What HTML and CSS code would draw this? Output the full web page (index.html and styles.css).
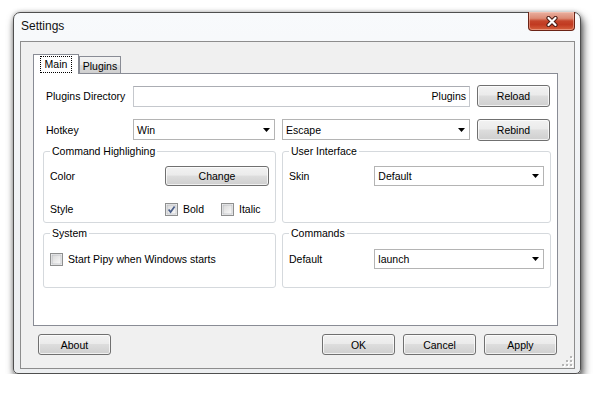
FILE: index.html
```html
<!DOCTYPE html>
<html>
<head>
<meta charset="utf-8">
<link rel="stylesheet" href="styles.css">
</head>
<body>
<div class="window">
  <div class="titlebar">
    <span class="title">Settings</span>
    <div class="close">
      <svg width="12" height="11" viewBox="0 0 12 11"><path d="M2.5 2 L9.5 9 M9.5 2 L2.5 9" stroke="#4a1c14" stroke-width="4.2" stroke-linecap="round" fill="none"/><path d="M2.5 2 L9.5 9 M9.5 2 L2.5 9" stroke="#ffffff" stroke-width="2.2" stroke-linecap="round" fill="none"/></svg>
    </div>
  </div>
  <div class="client">
    <div class="tabs">
      <div class="tab active"><span class="focus">Main</span></div>
      <div class="tab">Plugins</div>
    </div>
    <div class="panel">
      <div class="row">
        <span class="lbl">Plugins Directory</span>
        <div class="input">Plugins</div>
        <div class="btn btn-row">Reload</div>
      </div>
      <div class="row row2">
        <span class="lbl">Hotkey</span>
        <div class="select sel-win">Win<svg class="arrow" width="7" height="4" viewBox="0 0 7 4"><polygon points="0,0 7,0 3.5,4" fill="#000"/></svg></div>
        <div class="select sel-esc">Escape<svg class="arrow" width="7" height="4" viewBox="0 0 7 4"><polygon points="0,0 7,0 3.5,4" fill="#000"/></svg></div>
        <div class="btn btn-row">Rebind</div>
      </div>
      <div class="groups">
        <fieldset class="group g1">
          <legend>Command Highlighing</legend>
          <div class="frow">
            <span class="flbl flbl-l">Color</span>
            <div class="btn btn-change">Change</div>
          </div>
          <div class="frow frow2">
            <span class="flbl flbl-l">Style</span>
            <span class="check check-bold">
              <svg width="13" height="13" viewBox="0 0 13 13"><defs><linearGradient id="cb1" x1="0" y1="0" x2="1" y2="1"><stop offset="0" stop-color="#d8d8d8"/><stop offset="1" stop-color="#fbfbfb"/></linearGradient></defs><rect x="0.5" y="0.5" width="12" height="12" fill="#f4f4f4" stroke="#8e8f8f"/><rect x="2" y="2" width="9" height="9" fill="url(#cb1)" stroke="#aeb3b9" stroke-width="0.6"/><path d="M3.6 6.4 L5.6 9 L9.6 3.4" stroke="#4b5f8a" stroke-width="1.7" fill="none"/></svg>
              <span>Bold</span>
            </span>
            <span class="check">
              <svg width="13" height="13" viewBox="0 0 13 13"><defs><linearGradient id="cb2" x1="0" y1="0" x2="1" y2="1"><stop offset="0" stop-color="#d8d8d8"/><stop offset="1" stop-color="#fbfbfb"/></linearGradient></defs><rect x="0.5" y="0.5" width="12" height="12" fill="#f4f4f4" stroke="#8e8f8f"/><rect x="2" y="2" width="9" height="9" fill="url(#cb2)" stroke="#aeb3b9" stroke-width="0.6"/></svg>
              <span>Italic</span>
            </span>
          </div>
        </fieldset>
        <fieldset class="group g1">
          <legend>User Interface</legend>
          <div class="frow">
            <span class="flbl flbl-r">Skin</span>
            <div class="select sel-wide">Default<svg class="arrow" width="7" height="4" viewBox="0 0 7 4"><polygon points="0,0 7,0 3.5,4" fill="#000"/></svg></div>
          </div>
        </fieldset>
        <fieldset class="group g2">
          <legend>System</legend>
          <div class="frow">
            <span class="check">
              <svg width="13" height="13" viewBox="0 0 13 13"><defs><linearGradient id="cb3" x1="0" y1="0" x2="1" y2="1"><stop offset="0" stop-color="#d8d8d8"/><stop offset="1" stop-color="#fbfbfb"/></linearGradient></defs><rect x="0.5" y="0.5" width="12" height="12" fill="#f4f4f4" stroke="#8e8f8f"/><rect x="2" y="2" width="9" height="9" fill="url(#cb3)" stroke="#aeb3b9" stroke-width="0.6"/></svg>
              <span>Start Pipy when Windows starts</span>
            </span>
          </div>
        </fieldset>
        <fieldset class="group g2">
          <legend>Commands</legend>
          <div class="frow">
            <span class="flbl flbl-r">Default</span>
            <div class="select sel-wide">launch<svg class="arrow" width="7" height="4" viewBox="0 0 7 4"><polygon points="0,0 7,0 3.5,4" fill="#000"/></svg></div>
          </div>
        </fieldset>
      </div>
    </div>
    <div class="footer">
      <div class="btn btn-foot">About</div>
      <div class="spacer"></div>
      <div class="btn btn-foot">OK</div>
      <div class="btn btn-foot">Cancel</div>
      <div class="btn btn-foot">Apply</div>
    </div>
    <svg class="grip" width="12" height="12" viewBox="0 0 12 12">
      <g fill="#ffffff"><rect x="10" y="2" width="2" height="2"/><rect x="10" y="6" width="2" height="2"/><rect x="6" y="6" width="2" height="2"/><rect x="10" y="10" width="2" height="2"/><rect x="6" y="10" width="2" height="2"/><rect x="2" y="10" width="2" height="2"/></g>
      <g fill="#b5b5b5"><rect x="9" y="1" width="2" height="2"/><rect x="9" y="5" width="2" height="2"/><rect x="5" y="5" width="2" height="2"/><rect x="9" y="9" width="2" height="2"/><rect x="5" y="9" width="2" height="2"/><rect x="1" y="9" width="2" height="2"/></g>
    </svg>
  </div>
</div>
</body>
</html>
```
FILE: styles.css
```css
html, body {
  margin: 0;
  padding: 0;
  background: #ffffff;
}
body {
  font-family: "Liberation Sans", Arial, sans-serif;
  font-size: 10.5px;
  color: #000;
}
* { box-sizing: border-box; }

.window {
  margin: 12px 0 0 13px;
  width: 568px;
  height: 362px;
  border: 1px solid #4f4f4f;
  border-radius: 7px 7px 5px 5px;
  background: linear-gradient(#f8fafc, #eff1f4 60%, #eceef0);
  box-shadow: 2px 5px 9px rgba(0, 0, 0, 0.7), 0 0 4px rgba(0, 0, 0, 0.25);
  display: flex;
  flex-direction: column;
}

.titlebar {
  height: 28px;
  display: flex;
  justify-content: space-between;
  align-items: flex-start;
  padding: 0 5px 0 7px;
}
.title {
  font-size: 12px;
  line-height: 14px;
  padding-top: 6px;
  color: #111;
}
.close {
  width: 47px;
  height: 19px;
  margin-top: -1px;
  border: 1px solid #6b2316;
  border-top: none;
  border-radius: 0 0 4px 4px;
  background: linear-gradient(#e9b1a2 0%, #dc8a74 35%, #c5452b 50%, #c13a21 70%, #d6623f 100%);
  box-shadow: inset 0 0 0 1px rgba(255, 210, 195, 0.45);
  display: flex;
  align-items: center;
  justify-content: center;
}

.client {
  position: relative;
  margin: 0 5px 4px 6px;
  height: 328px;
  border: 1px solid #8d8d8d;
  background: #f0f0f0;
  padding: 12px 0 0 12px;
  display: flex;
  flex-direction: column;
}

.tabs {
  display: flex;
  align-items: flex-end;
  height: 20px;
  margin-bottom: -1px;
  position: relative;
  z-index: 1;
}
.tab {
  height: 17px;
  width: 42px;
  margin-bottom: 1px;
  border: 1px solid #898c95;
  border-bottom: none;
  background: linear-gradient(#f3f3f3, #ebebeb 50%, #dddddd 51%, #cfcfcf);
  display: flex;
  align-items: center;
  justify-content: center;
  line-height: 12px;
  padding-top: 1px;
}
.tab.active {
  height: 20px;
  width: 46px;
  margin-bottom: 0;
  background: #ffffff;
  align-items: flex-start;
  padding-top: 1px;
}
.focus {
  border: 1px dotted #000;
  padding: 1px 4px 2px 4px;
  line-height: 12px;
}

.panel {
  width: 525px;
  height: 253px;
  border: 1px solid #898c95;
  background: #ffffff;
  padding: 11px 0 0 9px;
}

.row {
  display: flex;
  align-items: flex-start;
  margin-left: 3px;
  height: 22px;
}
.row2 { margin-top: 12px; }
.lbl {
  width: 87px;
  align-self: center;
}
.input {
  width: 337px;
  height: 21px;
  margin-top: 1px;
  margin-right: 7px;
  border: 1px solid #c5c8cd;
  border-top-color: #abadb3;
  background: #fff;
  text-align: right;
  padding-right: 3px;
  line-height: 19px;
}
.select {
  height: 21px;
  border: 1px solid #b4b4b4;
  background: #fff;
  display: flex;
  align-items: center;
  justify-content: space-between;
  padding: 0 4px 0 3px;
}
.sel-win { width: 142px; margin-right: 7px; }
.sel-esc { width: 188px; margin-right: 7px; }
.sel-wide { width: 171px; height: 20px; }
.arrow { flex: none; }

.btn {
  border: 1px solid #707070;
  border-radius: 3px;
  background: linear-gradient(#f2f2f2, #ebebeb 45%, #dddddd 50%, #cfcfcf);
  box-shadow: inset 0 0 0 1px rgba(255, 255, 255, 0.7);
  display: flex;
  align-items: center;
  justify-content: center;
  color: #000;
}
.btn-row { width: 73px; height: 22px; }
.btn-change { width: 104px; height: 20px; }
.btn-foot { width: 73px; height: 21px; }

.groups {
  margin-top: 5px;
  display: grid;
  grid-template-columns: 233px 269px;
  grid-template-rows: 77px 60px;
  column-gap: 6px;
  row-gap: 5px;
}
.group {
  margin: 0;
  min-width: 0;
  border: 1px solid #d5d9dd;
  border-radius: 3px;
  padding: 9px 6px 3px 6px;
}
.group legend {
  padding: 0 2px;
  line-height: 11px;
  height: 11px;
}
.g2 { padding-top: 10px; }
.frow {
  display: flex;
  align-items: center;
  height: 20px;
}
.frow2 { margin-top: 13px; }
.flbl-l { width: 115px; }
.flbl-r { width: 86px; }
.check {
  display: flex;
  align-items: center;
  gap: 5px;
}
.check svg { flex: none; }
.check-bold { width: 56px; }

.footer {
  margin-top: 8px;
  display: flex;
  gap: 8px;
  padding: 0 17px 0 5px;
}
.spacer { flex: 1; }

.grip {
  position: absolute;
  right: 1px;
  bottom: 1px;
}
```
